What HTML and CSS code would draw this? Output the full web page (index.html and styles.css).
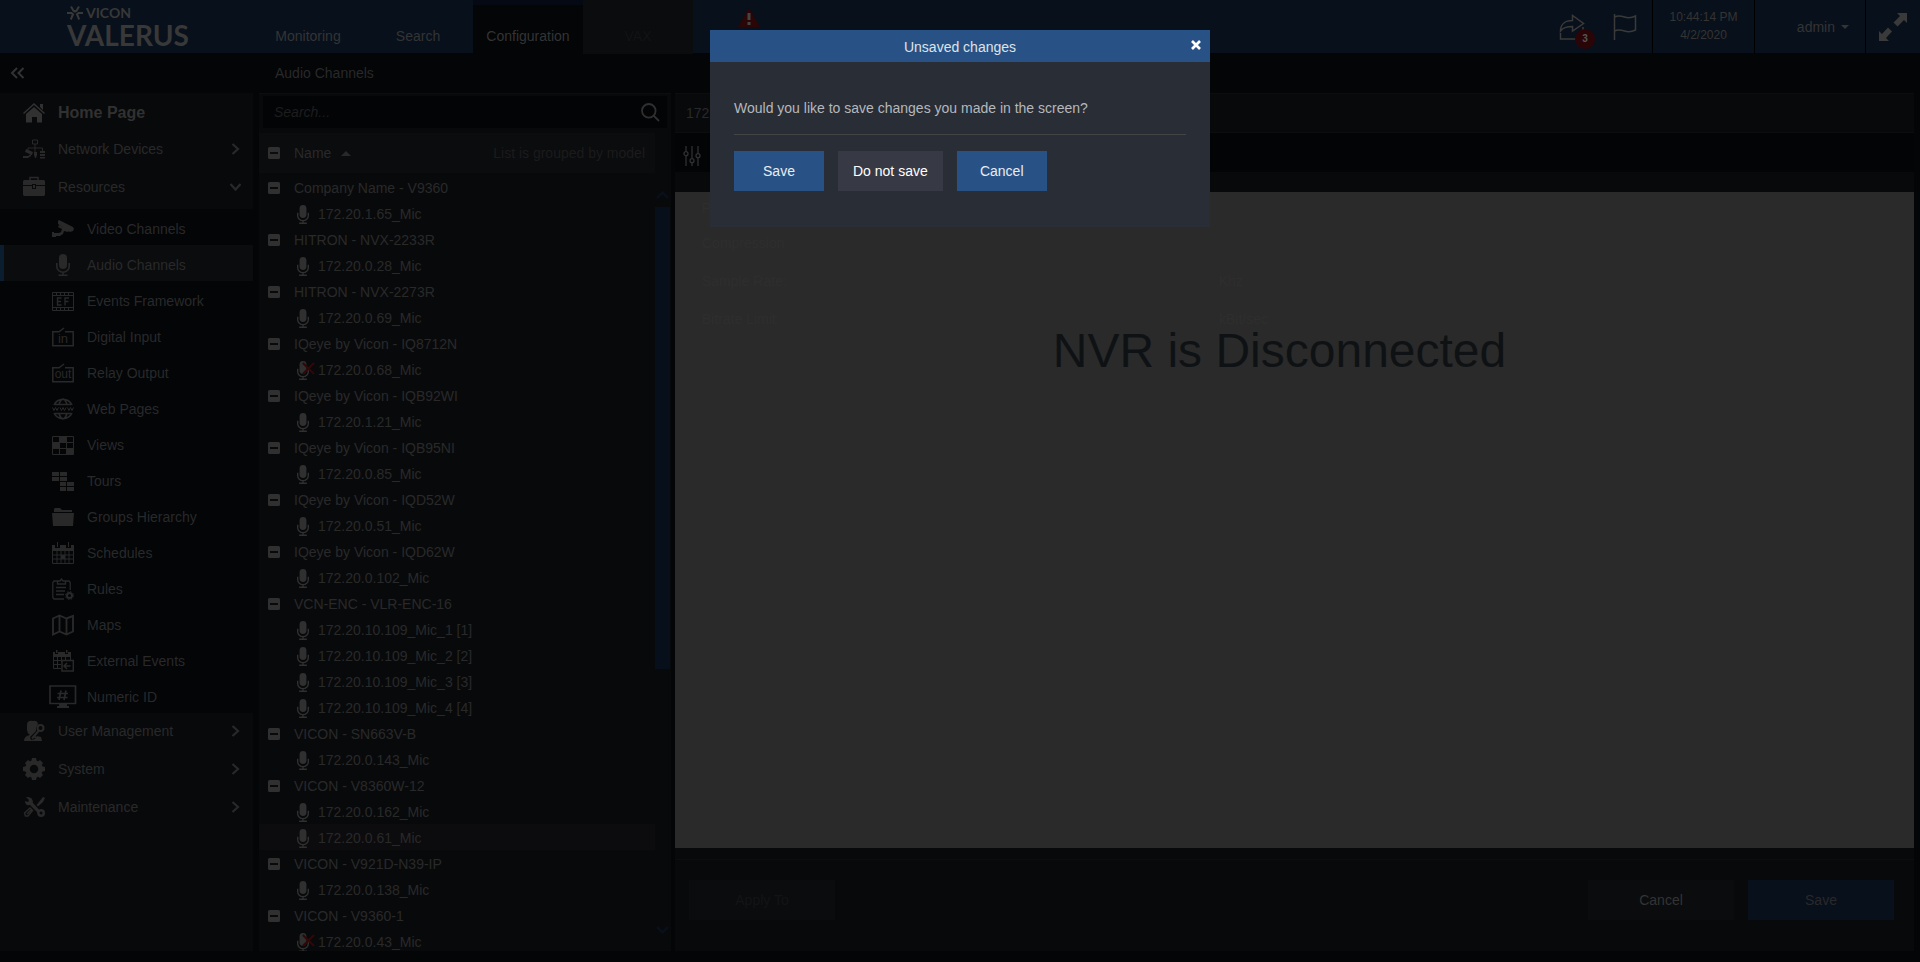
FILE: index.html
```html
<!DOCTYPE html>
<html lang="en">
<head>
<meta charset="utf-8">
<title>Vicon Valerus - Audio Channels</title>
<link rel="stylesheet" href="styles.css">
</head>
<body>
<svg class="sprite" aria-hidden="true">
  <symbol id="mic" viewBox="0 0 14 22"><rect x="3" y="0" width="8" height="15" rx="4"/><path d="M.8 9v3.500a6.200 5.700 0 0 0 12.400 0V9M7 18v3M2.500 21.200h9" fill="none" stroke="currentColor" stroke-width="1.600"/></symbol>
  <symbol id="minus" viewBox="0 0 12 12"><path fill-rule="evenodd" d="M1.500 0h9A1.500 1.500 0 0 1 12 1.500v9a1.500 1.500 0 0 1-1.500 1.500h-9A1.500 1.500 0 0 1 0 10.500v-9A1.500 1.500 0 0 1 1.500 0zM2 5v2h8V5z"/></symbol>
  <symbol id="chev" viewBox="0 0 9 12"><path d="M1.500 1l5.500 5-5.500 5" fill="none" stroke="currentColor" stroke-width="2.200"/></symbol>
  <symbol id="cross" viewBox="0 0 12 12"><path d="M.8 1l10.400 10M11.200 1L.8 11" fill="none" stroke="currentColor" stroke-width="2"/></symbol>
</svg>

<header class="topbar">
  <div class="logo">
    <div class="logo-vicon">
      <svg width="16" height="14" viewBox="0 0 16 14" fill="none" stroke="currentColor" stroke-width="2"><path d="M4 .5l2.500 4.200L8 5.500l1.500-.8L12 .5M0 7h4.500L6 8.200 3.800 13.500M16 7h-4.500L10 8.200l2.200 5.300M8 5.500v0"/></svg>
      <span>VICON</span>
    </div>
    <div class="logo-valerus">VALERUS</div>
  </div>
  <nav class="tabs">
    <a href="#">Monitoring</a>
    <a href="#">Search</a>
    <a href="#" class="current">Configuration</a>
    <a href="#" class="disabled">VAX</a>
  </nav>
  <svg class="alert" width="22" height="19" viewBox="0 0 22 19"><path d="M11 0l11 19H0z" fill="#2a0606"/><path d="M11 5v7M11 14v3" stroke="#444" stroke-width="3"/></svg>
  <div class="tools">
    <button class="tool share" aria-label="Exports">
      <svg width="27" height="26" viewBox="0 0 27 26" fill="none" stroke="currentColor" stroke-width="1.500"><path d="M1.500 17c0-6 4-10.500 12-10.500V1.500L24.500 9.500 13.500 17v-4.500C8 12.500 4 13.500 1.500 17zM1.500 19v6H24V13"/></svg>
      <span class="badge">3</span>
    </button>
    <button class="tool flag" aria-label="Flag">
      <svg width="24" height="26" viewBox="0 0 24 26" fill="none" stroke="currentColor" stroke-width="1.500"><path d="M1.500 0v26M1.500 3c4-2 7-1 10 0s7 1 11-1v14c-4 2-8 2-11 1s-6-2-10 0"/></svg>
    </button>
    <div class="clock"><span>10:44:14 PM</span><span>4/2/2020</span></div>
    <button class="user">admin <svg width="8" height="4" viewBox="0 0 8 4"><path d="M0 0h8L4 4z" fill="currentColor"/></svg></button>
    <button class="expand" aria-label="Full screen">
      <svg width="30" height="30" viewBox="0 0 30 30"><path d="M19 1h10v10l-3-3-6.500 6.500-4-4L22 4zM1 29V19l3 3 6-6.500 4 4L8 26l3 3z"/></svg>
    </button>
  </div>
</header>

<div class="titlebar">
  <button class="collapse" aria-label="Collapse menu"><svg width="15" height="12" viewBox="0 0 15 12" fill="none" stroke="currentColor" stroke-width="2"><path d="M7 1L2 6l5 5M13.500 1l-5 5 5 5"/></svg></button>
  <h1>Audio Channels</h1>
</div>

<div class="workspace">
  <nav class="sidebar">
    <a href="#" class="main home"><svg viewBox="0 0 22 22"><path d="M11 1l11 10-1 1L11 3 1 12l-1-1zM17 2h3v6l-3-3zM11 5l8 7v8.500h-5V15H9v5.500H3V12z"/></svg>Home Page</a>
    <a href="#" class="main"><svg viewBox="0 0 22 22"><path d="M9.500 2h5v4h-5zM12 6v8M5 14v-4h14.500v4" fill="none" stroke="currentColor"/><path d="M3 11l7 3-1 3-7-3zM0 18h5l3-2v2l-3 2H0zM11 14h3v3l-1 3h-1l-1-3zM17 13h5v2h-5zM17 16h5v2h-5zM17 19h5v1.500h-5z"/></svg>Network Devices<svg class="chev"><use href="#chev"/></svg></a>
    <a href="#" class="main"><svg viewBox="0 0 22 22"><path d="M7 4V1.500h8V4" fill="none" stroke="currentColor" stroke-width="1.500"/><path fill-rule="evenodd" d="M1 4h20l1 1v4H13V8H9v1H0V5zM0 10h9v3h4v-3h9v9l-1 1H1l-1-1zM10 9h2v3h-2z"/></svg>Resources<svg class="chev open"><use href="#chev"/></svg></a>
    <div class="sub">
      <a href="#"><svg viewBox="0 0 22 22"><path d="M6 3l1-1 14 7 1 2-1 2-3 1L6 6zM7 7l10 6-1 1-4-1-1 3-3 2H4v1H0v-5h2v1h5l2-1 1-3-4-2z"/></svg>Video Channels</a>
      <a href="#" class="current"><svg viewBox="0 0 14 22"><use href="#mic"/></svg>Audio Channels</a>
      <a href="#"><svg viewBox="0 0 22 22"><path d="M.5 2.500h21v18H.5zM.5 5.500h21M.5 17.500h21M4.500 2.500v3M8.500 2.500v3M12.500 2.500v3M16.500 2.500v3M4.500 17.500v3M8.500 17.500v3M12.500 17.500v3M16.500 17.500v3" fill="none" stroke="currentColor"/><path d="M9.500 8H5.500v7h4M5.500 11.500h3.500M17 8h-4v7.500M13 11.500h3.500" fill="none" stroke="currentColor" stroke-width="1.400"/></svg>Events Framework</a>
      <a href="#"><svg viewBox="0 0 22 22"><path d="M13 5.800h8.200v14H.8v-14H7L12 2" fill="none" stroke="currentColor" stroke-width="1.500"/><text x="11" y="17" text-anchor="middle" font-size="13">in</text></svg>Digital Input</a>
      <a href="#"><svg viewBox="0 0 22 22"><path d="M13 5.800h8.200v14H.8v-14H7L12 2" fill="none" stroke="currentColor" stroke-width="1.500"/><text x="11" y="16" text-anchor="middle" font-size="12">out</text></svg>Relay Output</a>
      <a href="#"><svg viewBox="0 0 22 22"><path d="M2 7a10 10 0 0 1 18 0M2 15a10 10 0 0 0 18 0M3 6.500h16M3 15.500h16M7 7q1-5 4-6 3 1 4 6M7 15q1 5 4 6 3-1 4-6" fill="none" stroke="currentColor" stroke-width="1.700"/><path d="M.5 9.500l1.500 3 1.500-3 1.500 3 1.500-3M8 9.500l1.500 3 1.500-3 1.500 3 1.500-3M15.500 9.500l1.500 3 1.500-3 1.500 3 1.500-3" fill="none" stroke="currentColor"/></svg>Web Pages</a>
      <a href="#"><svg viewBox="0 0 22 22"><path d="M.5 2.500h21v18H.5zM7.500 2.500v18M14.500 2.500v18M.5 8.500h21M.5 14.500h21" fill="none" stroke="currentColor"/><path d="M7.500 2.500h7v6h-7zM.5 8.500h7v6h-7zM14.500 14.500h7v6h-7z"/></svg>Views</a>
      <a href="#"><svg viewBox="0 0 22 22"><path d="M0 2h7v4H0zM8 2h7v4H8zM0 7h7v4H0zM8 7h7v4H8zM8 12h6v4H8zM15 12h7v4h-7zM8 17h6v4H8zM15 17h7v4h-7z"/></svg>Tours</a>
      <a href="#"><svg viewBox="0 0 22 22"><path d="M2 6V3l1-1h5l2 2h10v2zM0 7h22l-1 13H1z"/></svg>Groups Hierarchy</a>
      <a href="#"><svg viewBox="0 0 22 22"><path d="M0 3h3v3h5V3h6v3h5V3h3v6H0zM5 0h1v5H5zM16 0h1v5h-1zM9 13h4v4H9z"/><path d="M.5 9v12.500h21V9M5 9v12M9 9v12M13 9v12M17 9v12M.5 13h21M.5 17h21" fill="none" stroke="currentColor"/></svg>Schedules</a>
      <a href="#"><svg viewBox="0 0 22 22"><path d="M5 3H2L.8 4.500v15L2 21h10M13 3h4l1.200 1.500V12M5.500 6V3H8l1.500-2L11 3h2.500v3zM4 9.500h10M4 13h9M4 16.500h8" fill="none" stroke="currentColor" stroke-width="1.300"/><circle cx="17.500" cy="17.500" r="2.500" fill="none" stroke="currentColor" stroke-width="2"/><circle cx="17.500" cy="17.500" r="4" fill="none" stroke="currentColor" stroke-dasharray="1.600 1.540"/></svg>Rules</a>
      <a href="#"><svg viewBox="0 0 22 22"><path d="M1 4.500l6.500-3 7 3L21 2v15.500l-6.500 3-7-3L1 20.500zM7.500 2v15M14.500 5v15" fill="none" stroke="currentColor" stroke-width="1.900"/></svg>Maps</a>
      <a href="#"><svg viewBox="0 0 22 22"><path d="M1 2h2v2h3V2h7v2h3V2h3v5H1zM4 0h1.500v3H4zM14 0h1.500v3H14z"/><path d="M1.500 7v11.500H9M5.500 7v11.500M9.500 7v5M13.500 7v3M18.500 7v3M1 10.500h18M1 14.500h8" fill="none" stroke="currentColor"/><path d="M10 10.500h11.300V21H10zM18.500 16h-6M15 13l-3 3 3 3" fill="none" stroke="currentColor" stroke-width="1.500"/></svg>External Events</a>
      <a href="#"><svg class="wide" viewBox="0 0 28 24"><path d="M1 1h25.500v17.500H1zM12 5.500L10 15M17 5.500L15 15M8.500 8.500H19M8 12.500h10.500" fill="none" stroke="currentColor" stroke-width="1.700"/><path d="M10 19h8v2h2v2H8v-2h2z"/></svg>Numeric ID</a>
    </div>
    <a href="#" class="main"><svg viewBox="0 0 22 22"><path d="M4 5q0-5 6-4 4-1 5 3l-2 4v3l-6 6 1 3 4-1 2-3 4 1 1 4H1q0-5 6-6-3-2-3-5z"/><path d="M9 18.500l7-8M13 18l-2-2" fill="none" stroke="currentColor" stroke-width="2"/><circle cx="17.500" cy="8" r="3" fill="none" stroke="currentColor" stroke-width="2"/></svg>User Management<svg class="chev"><use href="#chev"/></svg></a>
    <a href="#" class="main"><svg viewBox="0 0 22 22"><circle cx="11" cy="11" r="6.500" fill="none" stroke="currentColor" stroke-width="4.500"/><path d="M9 0h4l1 4H8zM9 22h4l1-4H8zM0 9v4l4 1V8zM22 9v4l-4 1V8zM2 5l3-3 3 2-4 4zM20 5l-3-3-3 2 4 4zM2 17l3 3 3-2-4-4zM20 17l-3 3-3-2 4-4z"/></svg>System<svg class="chev"><use href="#chev"/></svg></a>
    <a href="#" class="main"><svg viewBox="0 0 22 22"><path fill-rule="evenodd" d="M3 1l3 3-1 2-3-1q0 5 5 4l7 7q0 5 4 5t4-4-4-4l-2 .5-6-6.500Q10 0 3 1zM18 15.500a1.500 1.500 0 1 0 .1 3 1.500 1.500 0 0 0-.1-3z"/><path d="M20 1l2 1-2 4-5 4.500-1.500-1.500L18 3.500z"/><path d="M1.500 17L7 12l2.500 2.500L5 20H2.500zM4 18l4-4" fill="none" stroke="currentColor" stroke-width="1.500"/></svg>Maintenance<svg class="chev"><use href="#chev"/></svg></a>
  </nav>

  <section class="list">
    <label class="search">
      <input type="text" placeholder="Search..." aria-label="Search">
      <svg width="19" height="19" viewBox="0 0 19 19" fill="none" stroke="currentColor" stroke-width="1.800"><circle cx="7.800" cy="7.800" r="6.800"/><path d="M12.500 12.500l5.500 5.500"/></svg>
    </label>
    <div class="list-head">
      <button class="tog" aria-label="Collapse all"><svg><use href="#minus"/></svg></button>
      <span>Name</span>
      <svg class="sort" width="10" height="5" viewBox="0 0 10 5"><path d="M0 5l5-5 5 5z" fill="currentColor"/></svg>
      <span class="grouped">List is grouped by model</span>
    </div>
    <div class="list-body">
      <div class="rows">
        <div class="group"><button class="tog" aria-label="Collapse"><svg><use href="#minus"/></svg></button>Company Name - V9360</div>
        <div class="item"><svg class="mic"><use href="#mic"/></svg>172.20.1.65_Mic</div>
        <div class="group"><button class="tog" aria-label="Collapse"><svg><use href="#minus"/></svg></button>HITRON - NVX-2233R</div>
        <div class="item"><svg class="mic"><use href="#mic"/></svg>172.20.0.28_Mic</div>
        <div class="group"><button class="tog" aria-label="Collapse"><svg><use href="#minus"/></svg></button>HITRON - NVX-2273R</div>
        <div class="item"><svg class="mic"><use href="#mic"/></svg>172.20.0.69_Mic</div>
        <div class="group"><button class="tog" aria-label="Collapse"><svg><use href="#minus"/></svg></button>IQeye by Vicon - IQ8712N</div>
        <div class="item"><svg class="mic"><use href="#mic"/></svg><svg class="off"><use href="#cross"/></svg>172.20.0.68_Mic</div>
        <div class="group"><button class="tog" aria-label="Collapse"><svg><use href="#minus"/></svg></button>IQeye by Vicon - IQB92WI</div>
        <div class="item"><svg class="mic"><use href="#mic"/></svg>172.20.1.21_Mic</div>
        <div class="group"><button class="tog" aria-label="Collapse"><svg><use href="#minus"/></svg></button>IQeye by Vicon - IQB95NI</div>
        <div class="item"><svg class="mic"><use href="#mic"/></svg>172.20.0.85_Mic</div>
        <div class="group"><button class="tog" aria-label="Collapse"><svg><use href="#minus"/></svg></button>IQeye by Vicon - IQD52W</div>
        <div class="item"><svg class="mic"><use href="#mic"/></svg>172.20.0.51_Mic</div>
        <div class="group"><button class="tog" aria-label="Collapse"><svg><use href="#minus"/></svg></button>IQeye by Vicon - IQD62W</div>
        <div class="item"><svg class="mic"><use href="#mic"/></svg>172.20.0.102_Mic</div>
        <div class="group"><button class="tog" aria-label="Collapse"><svg><use href="#minus"/></svg></button>VCN-ENC - VLR-ENC-16</div>
        <div class="item"><svg class="mic"><use href="#mic"/></svg>172.20.10.109_Mic_1 [1]</div>
        <div class="item"><svg class="mic"><use href="#mic"/></svg>172.20.10.109_Mic_2 [2]</div>
        <div class="item"><svg class="mic"><use href="#mic"/></svg>172.20.10.109_Mic_3 [3]</div>
        <div class="item"><svg class="mic"><use href="#mic"/></svg>172.20.10.109_Mic_4 [4]</div>
        <div class="group"><button class="tog" aria-label="Collapse"><svg><use href="#minus"/></svg></button>VICON - SN663V-B</div>
        <div class="item"><svg class="mic"><use href="#mic"/></svg>172.20.0.143_Mic</div>
        <div class="group"><button class="tog" aria-label="Collapse"><svg><use href="#minus"/></svg></button>VICON - V8360W-12</div>
        <div class="item"><svg class="mic"><use href="#mic"/></svg>172.20.0.162_Mic</div>
        <div class="item selected"><svg class="mic"><use href="#mic"/></svg>172.20.0.61_Mic</div>
        <div class="group"><button class="tog" aria-label="Collapse"><svg><use href="#minus"/></svg></button>VICON - V921D-N39-IP</div>
        <div class="item"><svg class="mic"><use href="#mic"/></svg>172.20.0.138_Mic</div>
        <div class="group"><button class="tog" aria-label="Collapse"><svg><use href="#minus"/></svg></button>VICON - V9360-1</div>
        <div class="item"><svg class="mic"><use href="#mic"/></svg><svg class="off"><use href="#cross"/></svg>172.20.0.43_Mic</div>
      </div>
      <div class="scroll">
        <svg width="13" height="9" viewBox="0 0 13 9" fill="none" stroke="currentColor" stroke-width="2.500"><path d="M1 8l5.500-5.500L12 8"/></svg>
        <div class="track"><div class="thumb"></div></div>
        <svg width="13" height="9" viewBox="0 0 13 9" fill="none" stroke="currentColor" stroke-width="2.500"><path d="M1 1l5.500 5.500L12 1"/></svg>
      </div>
    </div>
  </section>

  <main class="detail">
    <h2>172.20.0.61_Mic</h2>
    <div class="toolbar">
      <svg width="18" height="20" viewBox="0 0 18 20" fill="none" stroke="currentColor" stroke-width="1.300"><path d="M3 0v5.500M3 10v10M9 0v12.500M9 17v3M15 0v7.500M15 12v8"/><circle cx="3" cy="7.700" r="2"/><circle cx="9" cy="14.700" r="2"/><circle cx="15" cy="9.700" r="2"/></svg>
    </div>
    <div class="form">
      <div class="field"><span>Profile:</span></div>
      <div class="field"><span>Compression</span></div>
      <div class="field"><span>Sample Rate:</span><span>Khz</span></div>
      <div class="field"><span>Bitrate Limit:</span><span>kBit/sec</span></div>
      <p class="notice">NVR is Disconnected</p>
    </div>
    <footer class="actions">
      <button class="apply">Apply To</button>
      <button class="cancel">Cancel</button>
      <button class="save">Save</button>
    </footer>
  </main>
</div>

<div class="dialog" role="dialog" aria-labelledby="dialog-title">
  <div class="dialog-head">
    <h2 id="dialog-title">Unsaved changes</h2>
    <button class="close" aria-label="Close"><svg width="10" height="10" viewBox="0 0 12 12" fill="none" stroke="currentColor" stroke-width="3.200"><path d="M1.200 1.200l9.600 9.600M10.800 1.200l-9.600 9.600"/></svg></button>
  </div>
  <div class="dialog-body">
    <p>Would you like to save changes you made in the screen?</p>
    <div class="dialog-actions">
      <button>Save</button>
      <button class="secondary">Do not save</button>
      <button>Cancel</button>
    </div>
  </div>
</div>
</body>
</html>
```
FILE: styles.css
```css
:root {
  --page: #030507;
  --panel: #08090b;
  --raised: #0b0c0e;
  --line: #0c0d0f;
  --navy: #08101b;
  --text: #29292a;
  --bright: #343434;
}

* { box-sizing: border-box; }

body {
  margin: 0;
  height: 100vh;
  display: flex;
  flex-direction: column;
  overflow: hidden;
  background: var(--page);
  color: var(--text);
  font: 14px/20px "Liberation Sans", Arial, sans-serif;
}

h1, h2, p { margin: 0; font-size: 14px; font-weight: normal; }
a { color: inherit; text-decoration: none; }
button { margin: 0; padding: 0; border: 0; background: none; color: inherit; font: inherit; }
svg { display: block; flex: none; }
svg:not([fill]) { fill: currentColor; }
.sprite { position: absolute; width: 0; height: 0; }

/* Top bar */
.topbar { display: flex; flex: none; height: 53px; background: var(--navy); color: var(--bright); }
.logo { width: 253px; padding: 5px 0 0 67px; font-family: Lato, sans-serif; font-weight: bold; color: #383838; }
.logo-vicon { display: flex; align-items: center; gap: 3px; height: 16px; font-size: 14px; line-height: 16px; }
.logo-valerus { font-size: 28px; line-height: 28px; }
.tabs { display: flex; }
.tabs a { width: 110px; height: 53px; padding-top: 26px; text-align: center; }
.tabs .current { padding-top: 21px; border-top: 5px solid #040914; background: var(--page); }
.tabs .disabled { height: 54px; background: var(--raised); color: #121315; }
.alert { margin: 8px 0 0 45px; }
.tools { display: flex; margin-left: auto; }
.tool { height: 53px; color: #3a3a3a; }
.share { position: relative; width: 54px; }
.badge { position: absolute; left: 16px; top: 29px; width: 20px; height: 20px; border-radius: 10px; background: #2a0507; color: #555; font-size: 10px; font-weight: bold; text-align: center; }
.flag { width: 39px; }
.clock { display: flex; flex-direction: column; width: 102px; padding-top: 8px; border-left: 1px solid #000; text-align: center; font-size: 12px; line-height: 18px; }
.user { display: flex; align-items: center; justify-content: flex-end; gap: 6px; width: 111px; border-left: 1px solid #000; padding-right: 16px; }
.expand { width: 55px; padding: 3px 0 0 12px; border-left: 1px solid #000; color: #3a3a3a; }
.expand svg { margin-bottom: 2px; }

/* Title row */
.titlebar { display: flex; flex: none; align-items: center; height: 40px; padding-left: 10px; }
.collapse { width: 265px; color: #333; }

/* Columns */
.workspace { display: flex; flex: 1; min-height: 0; padding: 0 6px 11px 0; }
.sidebar { flex: none; width: 253px; margin-right: 6px; background: var(--panel); }
.main { display: flex; align-items: center; gap: 13px; height: 38px; padding: 0 13px 2px 23px; }
.main svg { width: 22px; height: 22px; }
.main .chev { width: 9px; height: 12px; margin-left: auto; }
.main .open { transform: rotate(90deg); }
.home { height: 38px; padding-bottom: 0; padding-top: 2px; font-size: 16px; font-weight: bold; color: #313131; }
.sub { margin-top: 2px; background: var(--page); }
.sub a { display: flex; align-items: center; gap: 13px; height: 36px; padding: 4px 0 0 52px; }
.sub .current { padding-left: 48px; border-left: 4px solid #0a1e30; background: var(--raised); }
.sub svg { width: 22px; height: 22px; }
.sub .wide { width: 28px; height: 24px; margin: 0 -3px; }

/* Channel list */
.list { display: flex; flex-direction: column; flex: none; width: 412px; margin-right: 4px; background: var(--panel); border-top: 1px solid var(--line); }
.search { display: flex; align-items: center; height: 32px; margin: 2px 4px; padding: 0 7px 0 11px; background: #030406; color: #303030; }
.search input { flex: 1; border: 0; padding: 0; outline: 0; background: none; color: var(--text); font: italic 14px/20px "Liberation Sans", Arial, sans-serif; }
.search input::placeholder { color: #1d1d1e; opacity: 1; }
.list-head { display: flex; flex: none; align-items: center; height: 40px; margin: 3px 16px 1px 0; padding: 0 10px 0 9px; background: var(--raised); }
.tog { width: 12px; margin-right: 14px; }
.tog svg { width: 12px; height: 12px; color: #303030; }
.sort { margin: 0 0 0 10px; }
.grouped { margin-left: auto; color: #1b1b1c; }
.list-body { display: flex; flex: 1; min-height: 0; }
.rows { flex: 1; overflow: hidden; }
.group, .item { display: flex; align-items: center; height: 26px; padding: 2px 0 0 9px; }
.item { position: relative; padding-left: 38px; }
.selected { background: #0c0c0e; }
.mic { width: 12px; height: 19px; margin-right: 9px; color: #303030; }
.off { position: absolute; left: 43px; top: 6px; width: 13px; height: 13px; color: #380505; }
.scroll { display: flex; flex-direction: column; align-items: center; flex: none; width: 15px; margin: 16px 1px 16px 0; color: #08101b; }
.track { flex: 1; width: 15px; padding: 8px 0; }
.thumb { height: 65%; background: #070f1a; }

/* Channel detail */
.detail { display: flex; flex-direction: column; flex: 1; min-width: 0; background: var(--panel); border-top: 1px solid var(--line); }
.detail h2 { height: 39px; padding: 9px 11px; border-bottom: 1px solid var(--line); }
.toolbar { height: 39px; padding: 13px 8px; background: #030406; color: #303030; }
.form { position: relative; flex: 1; min-height: 0; margin-top: 20px; padding: 0 27px; background: #2a2a2a; color: #2e2e2e; overflow: hidden; }
.field { display: grid; grid-template-columns: 517px 1fr; align-items: center; height: 38px; }
.field:first-child { height: 32px; }
.notice { position: absolute; left: 0; right: 30px; top: 131px; text-align: center; font-size: 48px; line-height: 56px; color: #0f1214; }
.actions { display: flex; flex: none; gap: 14px; height: 92px; margin-top: 11px; padding: 20px 20px 0 14px; border-top: 1px solid var(--line); }
.actions button { width: 146px; height: 40px; background: var(--raised); color: var(--bright); }
.actions .apply { margin-right: auto; color: #131416; }
.actions .save { background: var(--navy); color: var(--text); }

/* Dialog */
.dialog { position: fixed; left: 0; right: 0; top: 30px; width: 500px; margin: 0 auto; background: #292d36; }
.dialog-head { display: flex; align-items: center; height: 32px; padding: 2px 9px 0 19px; background: #285286; color: #dfe3e8; }
.dialog-head h2 { flex: 1; text-align: center; }
.close { padding-bottom: 4px; color: #fff; }
.dialog-body { padding: 36px 24px; }
.dialog-body p { padding-bottom: 16px; border-bottom: 1px solid #444; color: #b5b8bc; }
.dialog-actions { display: flex; gap: 14px; padding-top: 16px; }
.dialog-actions button { min-width: 90px; height: 40px; padding: 0 15px; background: #285286; color: #e8ecf0; }
.dialog-actions .secondary { background: #373a45; color: #fff; }
```
